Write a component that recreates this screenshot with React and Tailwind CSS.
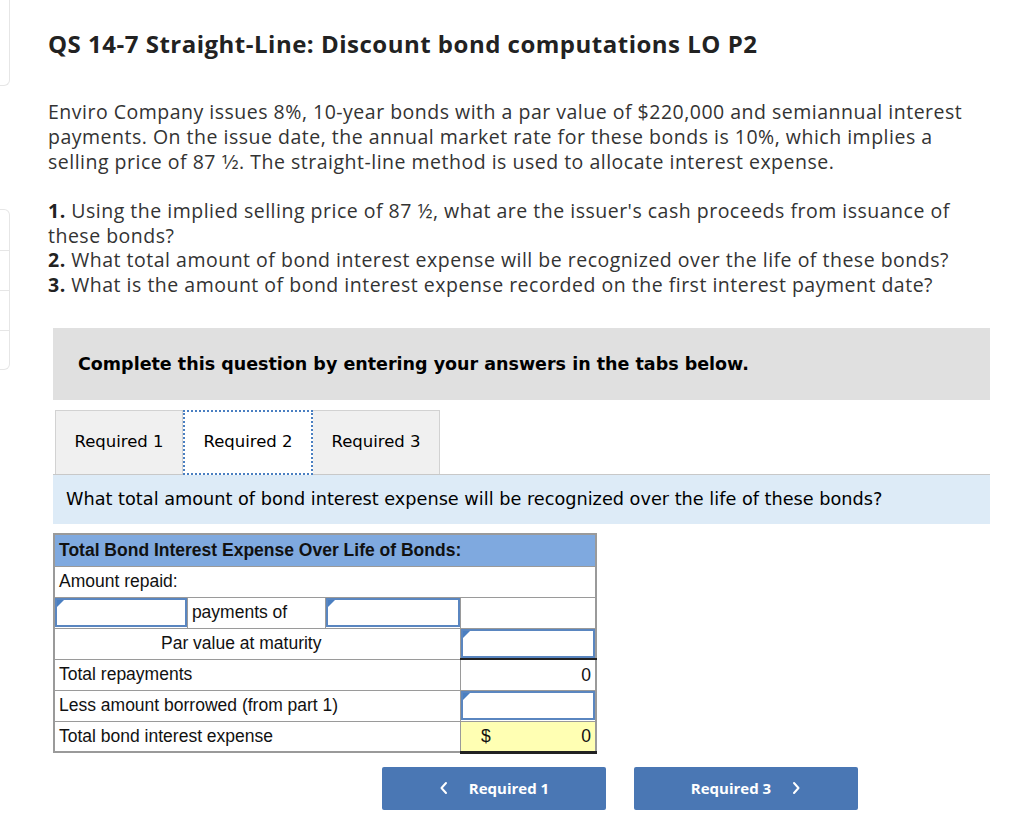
import React from "react";

const Corner = () => (
  <span className="absolute left-0 top-0 w-0 h-0 border-t-[7px] border-t-[#4a7fc1] border-r-[7px] border-r-transparent" />
);

function InputCell({ className = "" }) {
  return (
    <td className={`p-0 border border-[#9a9a9a] ${className}`}>
      <div className="relative h-[29px] border-2 border-[#5a86c0] bg-white">
        <Corner />
      </div>
    </td>
  );
}

function App() {
  const body = { fontFamily: "'Open Sans', Lato, sans-serif" };
  const verdana = { fontFamily: "'DejaVu Sans', Verdana, sans-serif" };
  const arial = { fontFamily: "'Liberation Sans', Arial, sans-serif" };

  return (
    <div className="flex min-h-[820px] bg-white text-[#222]" style={body}>
      <aside className="w-[10px] shrink-0">
        <div className="h-[86px] border-r border-b border-[#e6e6e6] rounded-br-[6px]" />
        <div className="mt-[123px] border-r border-y border-[#e6e6e6] rounded-r-[6px]">
          <div className="h-[41px] border-b border-[#e6e6e6]" />
          <div className="h-[40px] border-b border-[#e6e6e6]" />
          <div className="h-[40px] border-b border-[#e6e6e6]" />
          <div className="h-[38px]" />
        </div>
      </aside>

      <main className="pl-[38px] w-[990px]">
        <h1 className="mt-[28px] text-[24px] font-bold leading-[32px] tracking-[0.5px] text-[#222] whitespace-nowrap">
          QS 14-7 Straight-Line: Discount bond computations LO P2
        </h1>

        <p className="mt-[39px] text-[19.5px] leading-[25px] tracking-[0.5px] text-[#333] whitespace-nowrap">
          Enviro Company issues 8%, 10-year bonds with a par value of $220,000 and semiannual interest
          <br />
          payments. On the issue date, the annual market rate for these bonds is 10%, which implies a
          <br />
          selling price of 87 1⁄2. The straight-line method is used to allocate interest expense.
        </p>

        <div className="mt-[25px] text-[19.5px] leading-[24.5px] tracking-[0.5px] text-[#333] whitespace-nowrap">
          <p>
            <b className="text-[#222]">1.</b> Using the implied selling price of 87 ½, what are the issuer's cash proceeds from issuance of
            <br />
            these bonds?
          </p>
          <p>
            <b className="text-[#222]">2.</b> What total amount of bond interest expense will be recognized over the life of these bonds?
          </p>
          <p>
            <b className="text-[#222]">3.</b> What is the amount of bond interest expense recorded on the first interest payment date?
          </p>
        </div>

        <div className="ml-[5px] w-[937px]">
          <div className="mt-[31px] h-[72px] bg-[#e0e0e0] flex items-center pl-[25px]">
            <h2 className="text-[17.5px] font-bold text-black" style={verdana}>
              Complete this question by entering your answers in the tabs below.
            </h2>
          </div>

          <div className="mt-[10px] flex items-end border-b border-[#c8c8c8] text-[16.5px] text-black" style={verdana}>
            <button className="h-[64px] w-[128px] ml-[2px] bg-[#f0f0f0] border border-b-0 border-[#d2d2d2]">
              Required 1
            </button>
            <button className="h-[65px] w-[130px] bg-white border-2 border-dotted border-[#4a7fc1] -mb-px">
              Required 2
            </button>
            <button className="h-[64px] w-[127px] bg-[#f0f0f0] border border-b-0 border-l-0 border-[#d2d2d2]">
              Required 3
            </button>
          </div>

          <div className="h-[49px] bg-[#ddebf7] flex items-center pl-[13px] text-[17.7px] text-black" style={verdana}>
            What total amount of bond interest expense will be recognized over the life of these bonds?
          </div>

          <table className="mt-[9px] w-[544px] border-collapse border-2 border-[#9a9a9a] text-[17.5px] text-[#111]" style={arial}>
            <colgroup>
              <col className="w-[134px]" />
              <col className="w-[138px]" />
              <col className="w-[136px]" />
              <col className="w-[136px]" />
            </colgroup>
            <tbody>
              <tr className="h-[32px] bg-[#7fa9df]">
                <td colSpan={4} className="px-[4px] py-0 font-bold border border-[#9a9a9a]">
                  Total Bond Interest Expense Over Life of Bonds:
                </td>
              </tr>
              <tr className="h-[31px]">
                <td colSpan={4} className="px-[4px] py-0 border border-[#9a9a9a]">Amount repaid:</td>
              </tr>
              <tr className="h-[31px]">
                <InputCell />
                <td className="px-[4px] py-0 border border-[#9a9a9a]">payments of</td>
                <InputCell />
                <td className="border border-[#9a9a9a]" />
              </tr>
              <tr className="h-[31px]">
                <td colSpan={3} className="pl-[106px] py-0 border border-[#9a9a9a]">Par value at maturity</td>
                <InputCell className="border-b-2 border-b-[#222]" />
              </tr>
              <tr className="h-[31px]">
                <td colSpan={3} className="px-[4px] py-0 border border-[#9a9a9a]">Total repayments</td>
                <td className="px-[4px] py-0 text-right border border-[#9a9a9a]">0</td>
              </tr>
              <tr className="h-[31px]">
                <td colSpan={3} className="px-[4px] py-0 border border-[#9a9a9a]">Less amount borrowed (from part 1)</td>
                <InputCell />
              </tr>
              <tr className="h-[31px]">
                <td colSpan={3} className="px-[4px] py-0 border border-[#9a9a9a]">Total bond interest expense</td>
                <td className="p-0 border border-[#9a9a9a] border-b-[3px] border-b-double border-b-[#222] bg-[#ffffb3]">
                  <div className="flex justify-between pl-[20px] pr-[4px]">
                    <span>$</span>
                    <span>0</span>
                  </div>
                </td>
              </tr>
            </tbody>
          </table>

          <div className="mt-[13px] flex gap-[28px] pl-[329px]">
            <button className="h-[43px] w-[224px] rounded-[2px] bg-[#4a77b4] text-white text-[15px] font-bold flex items-center justify-center gap-[20px]">
              <svg width="10" height="16" viewBox="0 0 10 16" fill="none" stroke="white" strokeWidth="2" strokeLinecap="round" strokeLinejoin="round">
                <path d="M7 3 L2.5 8 L7 13" />
              </svg>
              <span>Required 1</span>
            </button>
            <button className="h-[43px] w-[224px] rounded-[2px] bg-[#4a77b4] text-white text-[15px] font-bold flex items-center justify-center gap-[20px]">
              <span>Required 3</span>
              <svg width="10" height="16" viewBox="0 0 10 16" fill="none" stroke="white" strokeWidth="2" strokeLinecap="round" strokeLinejoin="round">
                <path d="M3 3 L7.5 8 L3 13" />
              </svg>
            </button>
          </div>
        </div>
      </main>
    </div>
  );
}

export default App;
